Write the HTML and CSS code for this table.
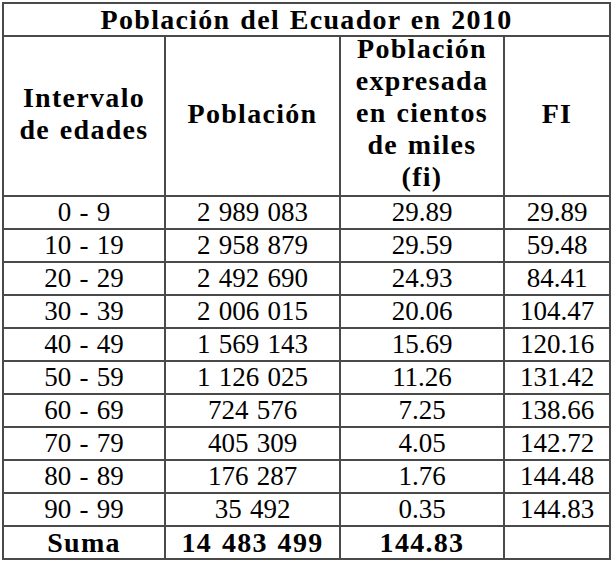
FILE: index.html
```html
<!DOCTYPE html>
<html lang="es">
<head>
<meta charset="utf-8">
<title>Población del Ecuador en 2010</title>
<link rel="stylesheet" href="styles.css">
</head>
<body>
<table class="tabla">
  <colgroup>
    <col class="c1"><col class="c2"><col class="c3"><col class="c4">
  </colgroup>
  <thead>
    <tr class="titulo"><th colspan="4">Población del Ecuador en 2010</th></tr>
    <tr class="cabecera">
      <th>Intervalo<br>de edades</th>
      <th>Población</th>
      <th class="multi"><div class="apilado">Población<br>expresada<br>en cientos<br>de miles<br>(fi)</div></th>
      <th>FI</th>
    </tr>
  </thead>
  <tbody>
    <tr><td>0 - 9</td><td>2 989 083</td><td>29.89</td><td>29.89</td></tr>
    <tr><td>10 - 19</td><td>2 958 879</td><td>29.59</td><td>59.48</td></tr>
    <tr><td>20 - 29</td><td>2 492 690</td><td>24.93</td><td>84.41</td></tr>
    <tr><td>30 - 39</td><td>2 006 015</td><td>20.06</td><td>104.47</td></tr>
    <tr><td>40 - 49</td><td>1 569 143</td><td>15.69</td><td>120.16</td></tr>
    <tr><td>50 - 59</td><td>1 126 025</td><td>11.26</td><td>131.42</td></tr>
    <tr><td>60 - 69</td><td>724 576</td><td>7.25</td><td>138.66</td></tr>
    <tr><td>70 - 79</td><td>405 309</td><td>4.05</td><td>142.72</td></tr>
    <tr><td>80 - 89</td><td>176 287</td><td>1.76</td><td>144.48</td></tr>
    <tr><td>90 - 99</td><td>35 492</td><td>0.35</td><td>144.83</td></tr>
    <tr class="suma"><td>Suma</td><td>14 483 499</td><td>144.83</td><td></td></tr>
  </tbody>
</table>
</body>
</html>
```
FILE: styles.css
```css
html, body {
  margin: 0;
  padding: 0;
  background: #ffffff;
}

.tabla {
  border-collapse: collapse;
  table-layout: fixed;
  width: 607px;
  margin: 2px 0 0 2px;
  font-family: "Liberation Serif", "DejaVu Serif", serif;
  font-size: 27px;
  color: #000000;
}

.c1 { width: 162px; }
.c2 { width: 175px; }
.c3 { width: 164px; }
.c4 { width: 106px; }

.tabla th,
.tabla td {
  border: 2px solid #4a4a4a;
  padding: 0;
  text-align: center;
  vertical-align: middle;
  line-height: 31px;
  word-spacing: 1.5px;
  white-space: nowrap;
}

.tabla th {
  font-size: 28px;
  font-weight: bold;
  letter-spacing: 1.3px;
}

.cabecera th {
  line-height: 32px;
  padding-bottom: 5px;
}

.cabecera th.multi {
  padding-bottom: 0;
}

.apilado {
  margin: -4px 0 2px;
}

.suma td {
  font-size: 28px;
  font-weight: bold;
  letter-spacing: 1.3px;
}
```
